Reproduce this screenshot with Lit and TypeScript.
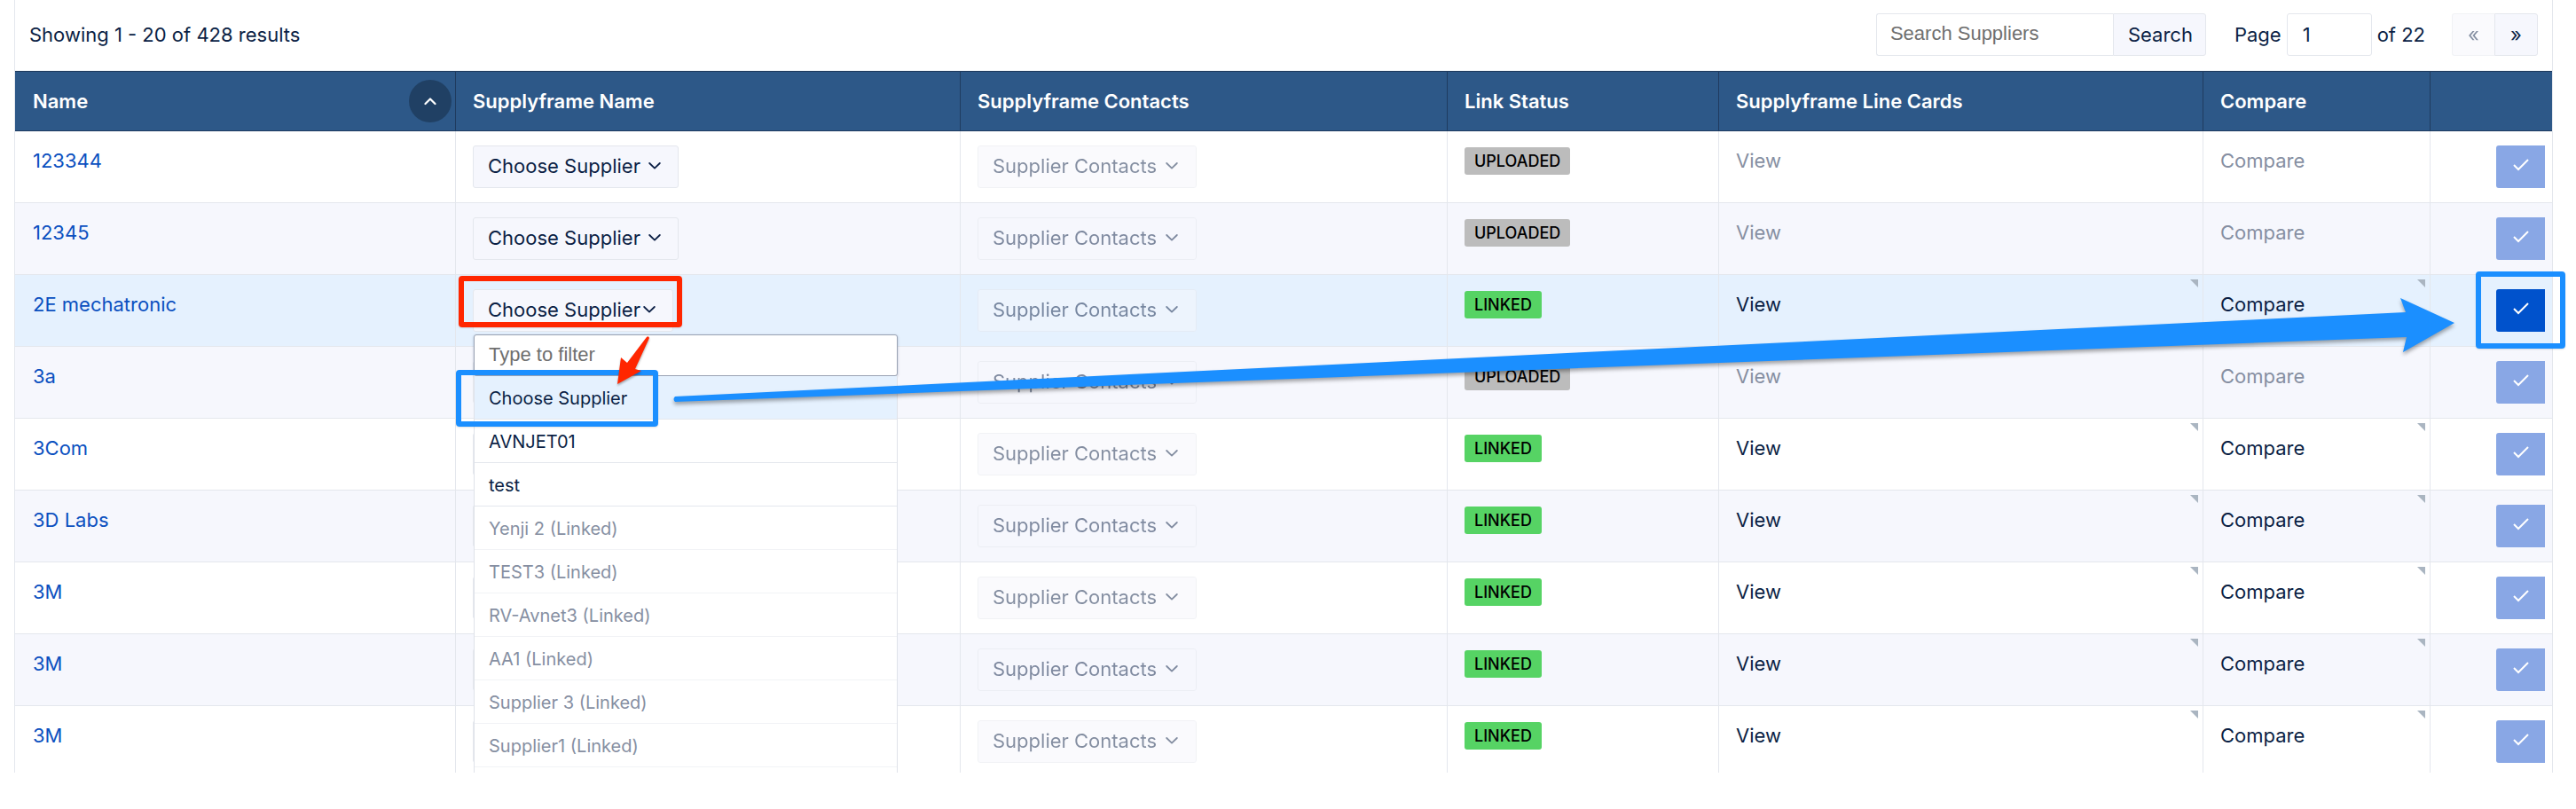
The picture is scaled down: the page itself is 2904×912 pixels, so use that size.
import { LitElement, html, css, svg, nothing } from "lit";
import { customElement, property, state } from "lit/decorators.js";
import { classMap } from "lit/directives/class-map.js";

interface Supplier {
  name: string;
  linked: boolean;
  open?: boolean;
}

interface Column {
  title: string;
  share: number;
  sorted?: boolean;
}

const COLUMNS: Column[] = [
  { title: "Name", share: 497, sorted: true },
  { title: "Supplyframe Name", share: 569 },
  { title: "Supplyframe Contacts", share: 549 },
  { title: "Link Status", share: 306 },
  { title: "Supplyframe Line Cards", share: 546 },
  { title: "Compare", share: 256 },
  { title: "", share: 137 },
];

const TOTAL_SHARE = COLUMNS.reduce((sum, c) => sum + c.share, 0);

const SUPPLIERS: Supplier[] = [
  { name: "123344", linked: false },
  { name: "12345", linked: false },
  { name: "2E mechatronic", linked: true, open: true },
  { name: "3a", linked: false },
  { name: "3Com", linked: true },
  { name: "3D Labs", linked: true },
  { name: "3M", linked: true },
  { name: "3M", linked: true },
  { name: "3M", linked: true },
];

const OPTIONS = [
  { label: "Choose Supplier", taken: false },
  { label: "AVNJET01", taken: false },
  { label: "test", taken: false },
  { label: "Yenji 2 (Linked)", taken: true },
  { label: "TEST3 (Linked)", taken: true },
  { label: "RV-Avnet3 (Linked)", taken: true },
  { label: "AA1 (Linked)", taken: true },
  { label: "Supplier 3 (Linked)", taken: true },
  { label: "Supplier1 (Linked)", taken: true },
];

const chevron = (up = false) => html`<svg class="chevron" width="14" height="10" viewBox="0 0 14 10" aria-hidden="true">
  ${up
    ? svg`<path d="M1.5 8 L7 2.5 L12.5 8" fill="none" stroke="currentColor" stroke-width="2.2" stroke-linecap="round" stroke-linejoin="round" />`
    : svg`<path d="M1.2 2 L7 7.6 L12.8 2" fill="none" stroke="currentColor" stroke-width="1.8" stroke-linecap="round" stroke-linejoin="round" />`}
</svg>`;

@customElement("supplier-menu")
export class SupplierMenu extends LitElement {
  @property({ attribute: false }) options = OPTIONS;
  @state() private selected = 0;

  static styles = css`
    :host {
      display: block;
      font-family: Inter, "Liberation Sans", sans-serif;
      color: #0b1f45;
    }
    .filter {
      display: block;
      box-sizing: border-box;
      width: 100%;
      height: 47px;
      padding: 0 16px 2px;
      border: 1px solid #99a2b3;
      border-radius: 3px;
      background: #fff;
      box-shadow: 0 1px 3px rgba(11, 31, 69, 0.25);
      font: 22px "Liberation Sans", sans-serif;
      color: #0b1f45;
      outline: none;
    }
    .filter::placeholder {
      color: #6f6f6f;
      opacity: 1;
    }
    .options {
      margin: 0;
      padding: 0 0 49px;
      list-style: none;
      border: 1px solid #dfe2e9;
      border-top: 0;
      background: #fff;
    }
    .option {
      box-sizing: border-box;
      height: 49px;
      padding: 0 16px;
      border-bottom: 1px solid #e4e7ed;
      font-size: 20px;
      line-height: 50px;
      cursor: pointer;
    }
    .option.active {
      background: #e5f1fe;
    }
    .option.taken {
      color: #868fa2;
      border-bottom-color: #f1f3f6;
      cursor: default;
    }
  `;

  render() {
    return html`
      <input class="filter" type="text" placeholder="Type to filter" aria-label="Type to filter" />
      <ul class="options" role="listbox" aria-label="Suppliers">
        ${this.options.map(
          (o, i) => html`<li
            role="option"
            aria-selected=${i === this.selected}
            aria-disabled=${o.taken}
            class=${classMap({ option: true, active: i === this.selected, taken: o.taken })}
            @click=${() => !o.taken && (this.selected = i)}
          >${o.label}</li>`
        )}
      </ul>
    `;
  }
}

@customElement("app-root")
export class AppRoot extends LitElement {
  static styles = css`
    :host {
      display: block;
      font-family: Inter, "Liberation Sans", sans-serif;
      font-size: 22px;
      line-height: 34px;
      color: #0b1f45;
      background: #fff;
    }
    * {
      box-sizing: border-box;
    }
    button,
    input {
      font: inherit;
      color: inherit;
      margin: 0;
    }
    button {
      cursor: pointer;
    }
    button:disabled {
      cursor: default;
    }
    .view {
      height: calc(100vh - 41px);
      overflow: hidden;
      padding: 0 26px 0 16px;
    }
    .panel {
      position: relative;
      border: solid #e4e7ed;
      border-width: 0 1px;
    }
    .toolbar {
      display: flex;
      align-items: center;
      height: 80px;
      padding: 0 16px 2px;
      border-bottom: 1px solid #eef2f6;
    }
    .count {
      margin: 0;
      flex: 1;
    }
    .search {
      display: flex;
    }
    .field {
      height: 48px;
      padding: 0 15px;
      border: 1px solid #e4e7ed;
      border-radius: 3px;
      background: #fff;
    }
    .search .field {
      width: 267px;
      padding-bottom: 2px;
      border-right: 0;
      border-radius: 3px 0 0 3px;
      font-family: "Liberation Sans", sans-serif;
    }
    .search .field::placeholder {
      color: #6f6f6f;
      opacity: 1;
    }
    .plain {
      height: 48px;
      padding: 0 16px;
      border: 1px solid #e4e7ed;
      border-radius: 3px;
      background: #f6f7fd;
      white-space: nowrap;
    }
    .search .plain {
      width: 105px;
      border-radius: 0 3px 3px 0;
    }
    .pager {
      display: flex;
      align-items: center;
      gap: 6px;
      margin-left: 32px;
    }
    .pager .field {
      width: 96px;
      padding: 0 17px;
    }
    .pages {
      display: flex;
      margin-left: 30px;
    }
    .pages .plain {
      width: 49px;
      padding: 0;
      border-radius: 0 3px 3px 0;
    }
    .pages .plain:first-child {
      width: 48px;
      border-right: 0;
      border-radius: 3px 0 0 3px;
    }
    .plain:disabled {
      opacity: 0.5;
    }
    .grid {
      width: 100%;
      table-layout: fixed;
      border-collapse: separate;
      border-spacing: 0;
    }
    th {
      height: 68px;
      padding: 0 19px;
      border: solid #1f3b5f;
      border-width: 1px 1px 1px 0;
      background: #2d5888;
      color: #fff;
      font-weight: 600;
      text-align: left;
      white-space: nowrap;
    }
    th:first-child,
    td:first-child {
      padding-left: 20px;
    }
    th:last-child {
      border-right: 0;
    }
    th:first-child {
      padding-right: 4px;
    }
    .heading {
      display: flex;
      align-items: center;
      justify-content: space-between;
    }
    .sort {
      display: grid;
      place-items: center;
      width: 48px;
      height: 48px;
      padding: 0;
      border: 0;
      border-radius: 50%;
      background: #204064;
      color: #fff;
    }
    td {
      position: relative;
      padding: 16px 19px;
      border: solid #e4e7ed;
      border-width: 0 1px 1px 0;
      vertical-align: top;
      line-height: 34px;
    }
    td:last-child {
      padding-right: 8px;
      border-right: 0;
    }
    tbody tr:nth-child(even) {
      background: #f6f7fd;
    }
    tbody tr.current {
      background: #e5f1fe;
    }
    .name {
      color: #0b50c0;
      text-decoration: none;
    }
    .picker {
      position: relative;
      display: flex;
    }
    .drop {
      display: flex;
      align-items: center;
      gap: 9px;
      padding: 0 19px 2px 16px;
    }
    .drop:disabled {
      gap: 10px;
      padding-right: 20px;
    }
    .current .picker .drop {
      gap: 3px;
    }
    supplier-menu {
      position: absolute;
      z-index: 2;
      top: 51px;
      left: 1px;
      width: 478px;
    }
    .badge {
      display: block;
      width: fit-content;
      height: 31px;
      margin-top: 2px;
      padding: 0 11px;
      border-radius: 3px;
      background: #bcbcbc;
      color: #000;
      font-size: 18px;
      font-weight: 500;
      line-height: 31px;
    }
    .badge.linked {
      background: #56d364;
    }
    .action {
      display: block;
      padding: 0;
      border: 0;
      background: none;
    }
    .action:disabled {
      color: #868fa2;
    }
    .corner {
      position: absolute;
      top: 5px;
      right: 5px;
      border: solid transparent;
      border-width: 0 9px 9px 0;
      border-right-color: #aab5c1;
    }
    .confirm {
      position: relative;
      width: 55px;
      margin-left: auto;
    }
    .check {
      display: grid;
      place-items: center;
      width: 55px;
      height: 48px;
      padding: 0 0 4px;
      border: 0;
      border-radius: 3px 0 0 3px;
      background: #0052cc;
      color: #fff;
    }
    .check:disabled {
      background: #89a7e5;
    }
    .mark {
      position: absolute;
      z-index: 3;
      border: 6px solid #1b8fff;
      border-radius: 4px;
      box-shadow: 0 1px 2px rgba(0, 0, 0, 0.12);
      pointer-events: none;
    }
    .mark.trigger {
      top: -15px;
      left: -16px;
      width: 252px;
      height: 58px;
      border-color: #ff2600;
    }
    .mark.choice {
      top: 91px;
      left: -19px;
      width: 228px;
      height: 64px;
    }
    .mark.apply {
      top: -20px;
      left: -23px;
      width: 101px;
      height: 87px;
    }
    .pointer {
      position: absolute;
      z-index: 3;
      top: 48px;
      left: 156px;
      pointer-events: none;
      overflow: visible;
      filter: drop-shadow(0 2px 1px rgba(0, 0, 0, 0.3));
    }
    .trail {
      position: absolute;
      z-index: 3;
      top: 330px;
      left: 741px;
      width: calc(100% - 850px);
      height: 130px;
      pointer-events: none;
      overflow: visible;
      filter: drop-shadow(0 3px 2px rgba(0, 0, 0, 0.35));
    }
  `;

  private renderPicker(s: Supplier) {
    return html`<div class="picker">
      <button class="plain drop" type="button" aria-haspopup="listbox" aria-expanded=${s.open ? "true" : "false"}>
        Choose Supplier ${chevron()}
      </button>
      ${s.open
        ? html`<supplier-menu></supplier-menu>
            <span class="mark trigger"></span>
            <span class="mark choice"></span>
            <svg class="pointer" width="50" height="64" viewBox="0 0 50 64" aria-hidden="true">
              <path d="M40 6 Q42 4 43 7 L27 42 L34 44 L7 59 L11 29 L18 35 Z" fill="#ff2600" />
            </svg>`
        : nothing}
    </div>`;
  }

  private renderRow(s: Supplier) {
    const corner = s.linked ? html`<span class="corner"></span>` : nothing;
    return html`<tr class=${classMap({ current: !!s.open })}>
      <td><a class="name" href="#">${s.name}</a></td>
      <td>${this.renderPicker(s)}</td>
      <td>
        <button class="plain drop" type="button" disabled>Supplier Contacts ${chevron()}</button>
      </td>
      <td>
        <span class=${classMap({ badge: true, linked: s.linked })}>${s.linked ? "LINKED" : "UPLOADED"}</span>
      </td>
      <td>${corner}<button class="action" type="button" ?disabled=${!s.linked}>View</button></td>
      <td>${corner}<button class="action" type="button" ?disabled=${!s.linked}>Compare</button></td>
      <td>
        <div class="confirm">
          <button class="check" type="button" aria-label="Apply" ?disabled=${!s.open}>
            <svg width="18" height="14" viewBox="0 0 18 14" aria-hidden="true">
              <path d="M1 7 L6 12 L17 1" fill="none" stroke="currentColor" stroke-width="2" />
            </svg>
          </button>
          ${s.open ? html`<span class="mark apply"></span>` : nothing}
        </div>
      </td>
    </tr>`;
  }

  render() {
    return html`<div class="view">
      <main class="panel">
        <div class="toolbar">
          <p class="count">Showing 1 - 20 of 428 results</p>
          <form class="search" @submit=${(e: Event) => e.preventDefault()}>
            <input class="field" type="text" placeholder="Search Suppliers" aria-label="Search Suppliers" />
            <button class="plain" type="submit">Search</button>
          </form>
          <div class="pager">
            <label for="page">Page</label>
            <input class="field" id="page" type="text" value="1" />
            <span>of 22</span>
          </div>
          <div class="pages">
            <button class="plain" type="button" aria-label="Previous page" disabled>«</button>
            <button class="plain" type="button" aria-label="Next page">»</button>
          </div>
        </div>
        <table class="grid">
          <colgroup>
            ${COLUMNS.map((c) => html`<col style="width:${(c.share / TOTAL_SHARE) * 100}%" />`)}
          </colgroup>
          <thead>
            <tr>
              ${COLUMNS.map((c) =>
                c.sorted
                  ? html`<th scope="col" aria-sort="ascending">
                      <div class="heading">
                        ${c.title}
                        <button class="sort" type="button" aria-label="Sort by name">${chevron(true)}</button>
                      </div>
                    </th>`
                  : html`<th scope="col">${c.title}</th>`
              )}
            </tr>
          </thead>
          <tbody>
            ${SUPPLIERS.map((s) => this.renderRow(s))}
          </tbody>
        </table>
        <svg class="trail" viewBox="0 0 2010 130" preserveAspectRatio="none" aria-hidden="true">
          <path
            d="M3 117 L1954 22 L1948 6 L2009 34 L1951 67 L1955 50 L3 123 Q0 120 3 117 Z"
            fill="#1b8fff"
          />
        </svg>
      </main>
    </div>`;
  }
}
